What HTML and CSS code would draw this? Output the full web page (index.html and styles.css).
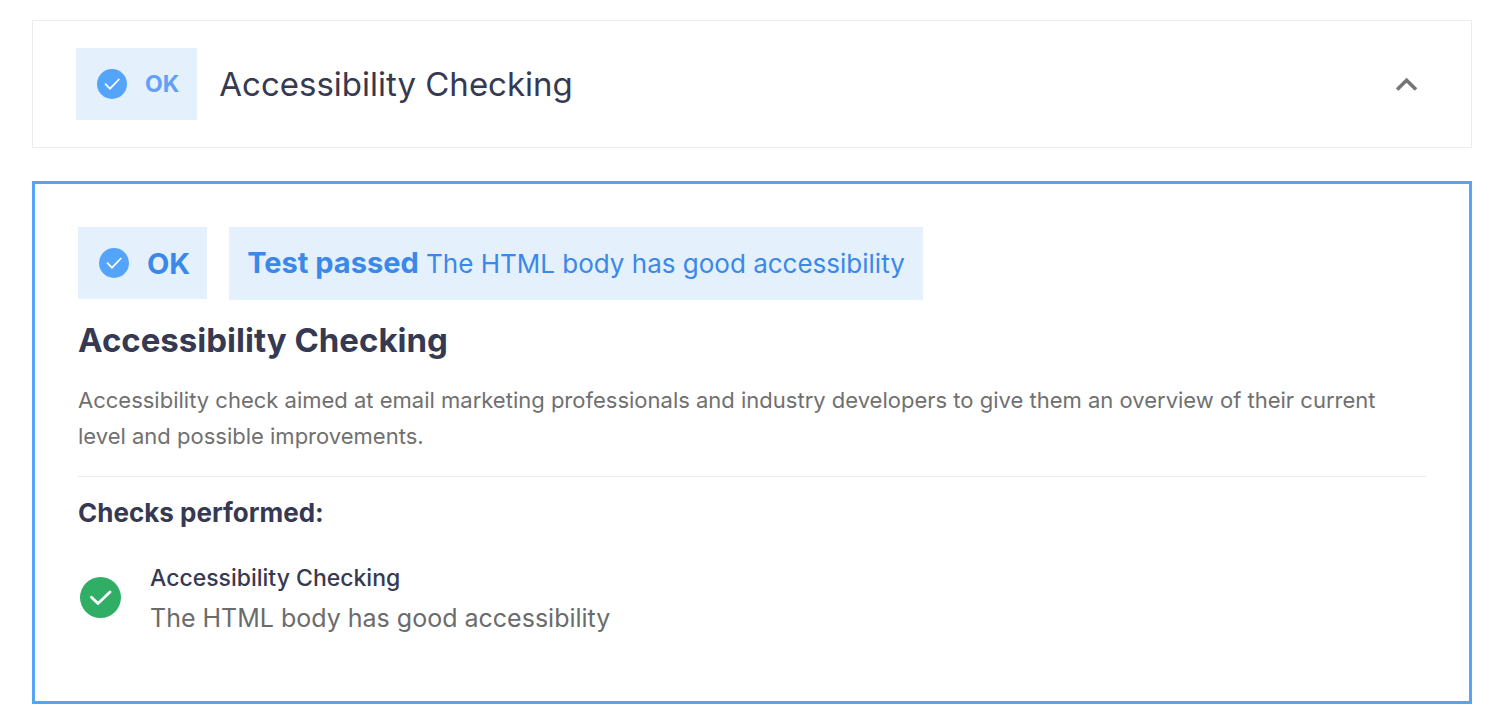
FILE: index.html
```html
<!DOCTYPE html>
<html lang="en">
<head>
  <meta charset="UTF-8" />
  <meta name="viewport" content="width=device-width, initial-scale=1.0" />
  <title>Accessibility Checking</title>
  <link rel="stylesheet" href="styles.css">
</head>
<body>
  <main class="report">
    <button class="accordion" type="button" aria-expanded="true" aria-controls="panel">
      <span class="badge">
        <svg class="badge-icon" viewBox="0 0 30 30" aria-hidden="true">
          <circle cx="15" cy="15" r="15" fill="#54a4fc" />
          <path d="M8 14.7l5 5L22.3 10" fill="none" stroke="#fff" stroke-width="1.7" />
        </svg>
        OK
      </span>
      <span class="accordion-title">Accessibility Checking</span>
      <svg class="chevron" viewBox="0 0 22 14" aria-hidden="true">
        <path d="M1.2 12.6L10.6 3.2L20 12.6" fill="none" stroke="#757575" stroke-width="3.6" />
      </svg>
    </button>

    <section class="panel" id="panel">
      <div class="status">
        <span class="badge badge-strong">
          <svg class="badge-icon" viewBox="0 0 30 30" aria-hidden="true">
            <circle cx="15" cy="15" r="15" fill="#54a4fc" />
            <path d="M8 14.7l5 5L22.3 10" fill="none" stroke="#fff" stroke-width="1.7" />
          </svg>
          OK
        </span>
        <p class="message"><strong>Test passed</strong> The HTML body has good accessibility</p>
      </div>
      <h2>Accessibility Checking</h2>
      <p class="description">Accessibility check aimed at email marketing professionals and industry developers to give them an overview of their current level and possible improvements.</p>
      <h3>Checks performed:</h3>
      <ul class="checks">
        <li>
          <svg class="check-icon" viewBox="0 0 42 42" aria-hidden="true">
            <circle cx="21.5" cy="20.5" r="20.5" fill="#31ae65" />
            <path d="M12.5 20.2l6.5 6.3L31 15" fill="none" stroke="#fff" stroke-width="2.8" stroke-linecap="round" stroke-linejoin="round" />
          </svg>
          <div>
            <h4>Accessibility Checking</h4>
            <p>The HTML body has good accessibility</p>
          </div>
        </li>
      </ul>
    </section>
  </main>
</body>
</html>
```
FILE: styles.css
```css
* {
  box-sizing: border-box;
}
body {
  margin: 0;
  background: #fff;
  color: #363952;
  font-family: Inter, sans-serif;
}
h2, h3, h4, p, ul {
  margin: 0;
  padding: 0;
}
.report {
  padding: 20px 24px 22px 32px;
}
.accordion {
  display: flex;
  align-items: center;
  width: 100%;
  padding: 27px 53px 27px 43px;
  border: 1px solid #ebebeb;
  background: #fff;
  color: inherit;
  font-family: inherit;
  text-align: left;
  cursor: pointer;
}
.accordion-title {
  flex: 1;
  margin-left: 22px;
  font-size: 33px;
  line-height: 40px;
}
.chevron {
  width: 22px;
  height: 14px;
}
.badge {
  display: flex;
  align-items: center;
  gap: 18px;
  height: 72px;
  padding: 0 18px 0 21px;
  background: #e4f0fc;
  color: #629ffb;
  font-size: 23px;
  font-weight: 700;
}
.badge-icon {
  width: 30px;
  height: 30px;
}
.badge-strong {
  padding-right: 17px;
  color: #3a88e9;
  font-size: 29px;
}
.panel {
  margin-top: 33px;
  padding: 43px 43px 63px;
  border: 3px solid #54a4fc;
}
.status {
  display: flex;
  gap: 22px;
}
.message {
  padding: 0 18px;
  background: #e4f0fc;
  color: #3a88e9;
  font-size: 26px;
  line-height: 72px;
}
.message strong {
  font-size: 29px;
  font-weight: 700;
}
h2 {
  margin-top: 20px;
  font-size: 33px;
  line-height: 40px;
}
.description {
  margin-top: 22px;
  padding-bottom: 22px;
  border-bottom: 1px solid #ebebeb;
  color: #707070;
  font-size: 22px;
  line-height: 36px;
}
h3 {
  margin-top: 20px;
  font-size: 26px;
  line-height: 32px;
}
.checks {
  list-style: none;
  margin-top: 29px;
}
.checks li {
  display: flex;
  align-items: center;
  gap: 29px;
}
.check-icon {
  width: 42px;
  height: 42px;
  margin-left: 1px;
}
h4 {
  font-size: 23px;
  font-weight: 500;
  line-height: 40px;
}
.checks p {
  color: #6b6b6b;
  font-size: 25px;
  line-height: 40px;
}
```
